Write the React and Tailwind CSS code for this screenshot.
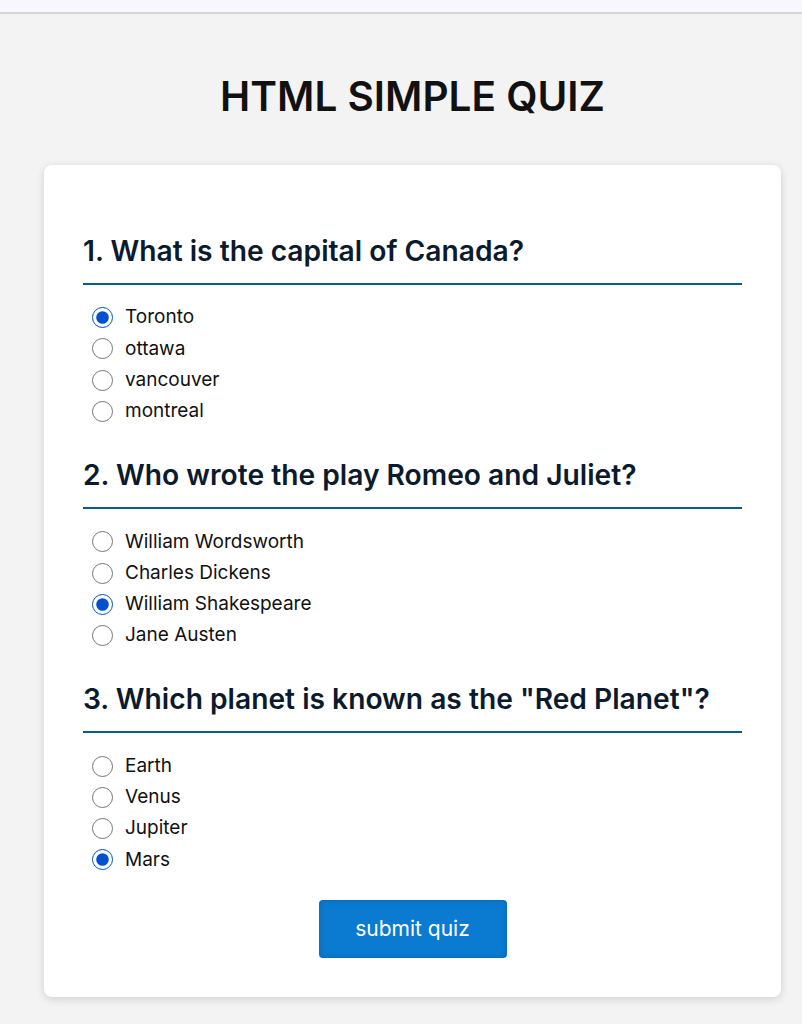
import { useState } from "react";

const questions = [
  {
    q: "1. What is the capital of Canada?",
    name: "q1",
    options: ["Toronto", "ottawa", "vancouver", "montreal"],
  },
  {
    q: "2. Who wrote the play Romeo and Juliet?",
    name: "q2",
    options: ["William Wordsworth", "Charles Dickens", "William Shakespeare", "Jane Austen"],
  },
  {
    q: '3. Which planet is known as the "Red Planet"?',
    name: "q3",
    options: ["Earth", "Venus", "Jupiter", "Mars"],
  },
];

export default function App() {
  const [answers, setAnswers] = useState({ q1: 0, q2: 2, q3: 3 });

  return (
    <div className="min-h-[1024px] bg-[#f3f3f3] font-['Inter',sans-serif]">
      <div className="h-[14px] bg-[#f8f6fe] border-b-2 border-[#d6d5da]"></div>

      <div className="w-[825px]">
        <h1 className="mt-[58px] text-center text-[40.5px] leading-[50px] font-semibold text-[#111]">
          HTML SIMPLE QUIZ
        </h1>
      </div>

      <form
        onSubmit={(e) => e.preventDefault()}
        className="mt-[43px] mx-[44px] w-[737px] bg-white rounded-lg shadow-[0_2px_8px_rgba(0,0,0,0.15)] px-[39px] pt-[69px] pb-[39px]"
      >
        {questions.map((item, qi) => (
          <div key={item.name} className={qi > 0 ? "mt-[31px]" : ""}>
            <h2 className="text-[28.2px] leading-[35px] font-semibold text-[#0b1a2c] pb-[14px] border-b-2 border-[#0b5c8f]">
              {item.q}
            </h2>
            <div className="mt-[17px] pl-[9px]">
              {item.options.map((opt, oi) => (
                <label key={opt} className="flex items-center h-[31.3px] text-[19px] text-[#111] cursor-pointer">
                  <input
                    type="radio"
                    name={item.name}
                    checked={answers[item.name] === oi}
                    onChange={() => setAnswers({ ...answers, [item.name]: oi })}
                    className="w-[21px] h-[21px] m-0 accent-[#0050d0]"
                  />
                  <span className="ml-[12px]">{opt}</span>
                </label>
              ))}
            </div>
          </div>
        ))}

        <div className="mt-[24px] flex justify-center">
          <button
            type="submit"
            className="w-[188px] h-[58px] rounded bg-[#0a7bd1] text-white text-[21px] shadow-[inset_0_0_6px_rgba(0,40,100,0.25)]"
          >
            submit quiz
          </button>
        </div>
      </form>
    </div>
  );
}
